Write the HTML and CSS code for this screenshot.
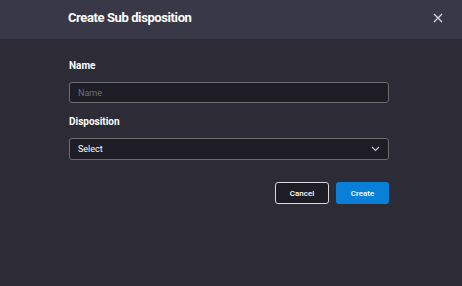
FILE: index.html
```html
<!DOCTYPE html>
<html lang="en">
<head>
<meta charset="UTF-8">
<meta name="viewport" content="width=device-width, initial-scale=1.0">
<title>Create Sub disposition</title>
<link rel="stylesheet" href="styles.css">
</head>
<body>

<div class="modal">
    <div class="modalHeader">
        <h2 class="modalTitle">Create Sub disposition</h2>
        <button class="closeBtn" aria-label="Close">
            <svg width="10" height="10" viewBox="0 0 10 10">
                <path d="M1 1 L9 9 M9 1 L1 9" stroke="#d8d8de" stroke-width="1.3" fill="none"/>
            </svg>
        </button>
    </div>
    <div class="modalBody">
        <label class="fieldLabel" for="name">Name</label>
        <input class="field" type="text" id="name" placeholder="Name">

        <label class="fieldLabel" for="disposition">Disposition</label>
        <div class="selectBox" id="disposition">
            <span>Select</span>
            <svg width="9" height="6" viewBox="0 0 9 6">
                <path d="M1 1 L4.5 4.5 L8 1" stroke="#c8c8d0" stroke-width="1.2" fill="none"/>
            </svg>
        </div>

        <div class="actions">
            <button class="btn cancelBtn">Cancel</button>
            <button class="btn createBtn">Create</button>
        </div>
    </div>
</div>

</body>
</html>
```

FILE: styles.css
```css
body {
    font-family: Roboto, "Noto Sans", sans-serif;
    background-color: #2c2b36;
    margin: 0;
    padding: 0;
}
.modal {
    width: 462px;
    height: 286px;
    background-color: #2c2b36;
}
.modalHeader {
    height: 39px;
    background-color: #393847;
    display: flex;
    align-items: center;
    justify-content: space-between;
    padding: 0 17px 0 68px;
}
.modalTitle {
    margin: 0;
    font-size: 13px;
    font-weight: 700;
    letter-spacing: -0.4px;
    color: #ffffff;
    margin-top: -4px;
}
.closeBtn {
    background: none;
    border: none;
    padding: 0;
    width: 14px;
    height: 14px;
    display: flex;
    align-items: center;
    justify-content: center;
    cursor: pointer;
    margin-top: -3px;
}
.modalBody {
    padding: 20px 73px 0 69px;
    display: flex;
    flex-direction: column;
}
.fieldLabel {
    font-size: 10px;
    font-weight: 700;
    color: #ffffff;
    line-height: 14px;
    margin-bottom: 9px;
}
.field, .selectBox {
    height: 22px;
    box-sizing: border-box;
    border: 1px solid #6b6b72;
    border-radius: 3px;
    background-color: #1e1d25;
    font-family: Roboto, "Noto Sans", sans-serif;
    font-size: 9px;
    color: #ffffff;
    padding: 0 8px;
    margin-bottom: 12px;
}
.field {
    height: 21px;
}
.field::placeholder {
    color: #6e6e78;
}
.selectBox {
    display: flex;
    align-items: center;
    justify-content: space-between;
    padding-right: 8px;
}
.actions {
    display: flex;
    justify-content: flex-end;
    gap: 7px;
    margin-top: 10px;
}
.btn {
    height: 22px;
    width: 53px;
    border-radius: 3px;
    font-family: Roboto, "Noto Sans", sans-serif;
    font-size: 8px;
    font-weight: 500;
    color: #ffffff;
    cursor: pointer;
    padding: 0;
}
.cancelBtn {
    width: 54px;
    background-color: #1e1d25;
    border: 1px solid #d8d8dc;
}
.createBtn {
    background-color: #0a7fd8;
    border: none;
}
```
